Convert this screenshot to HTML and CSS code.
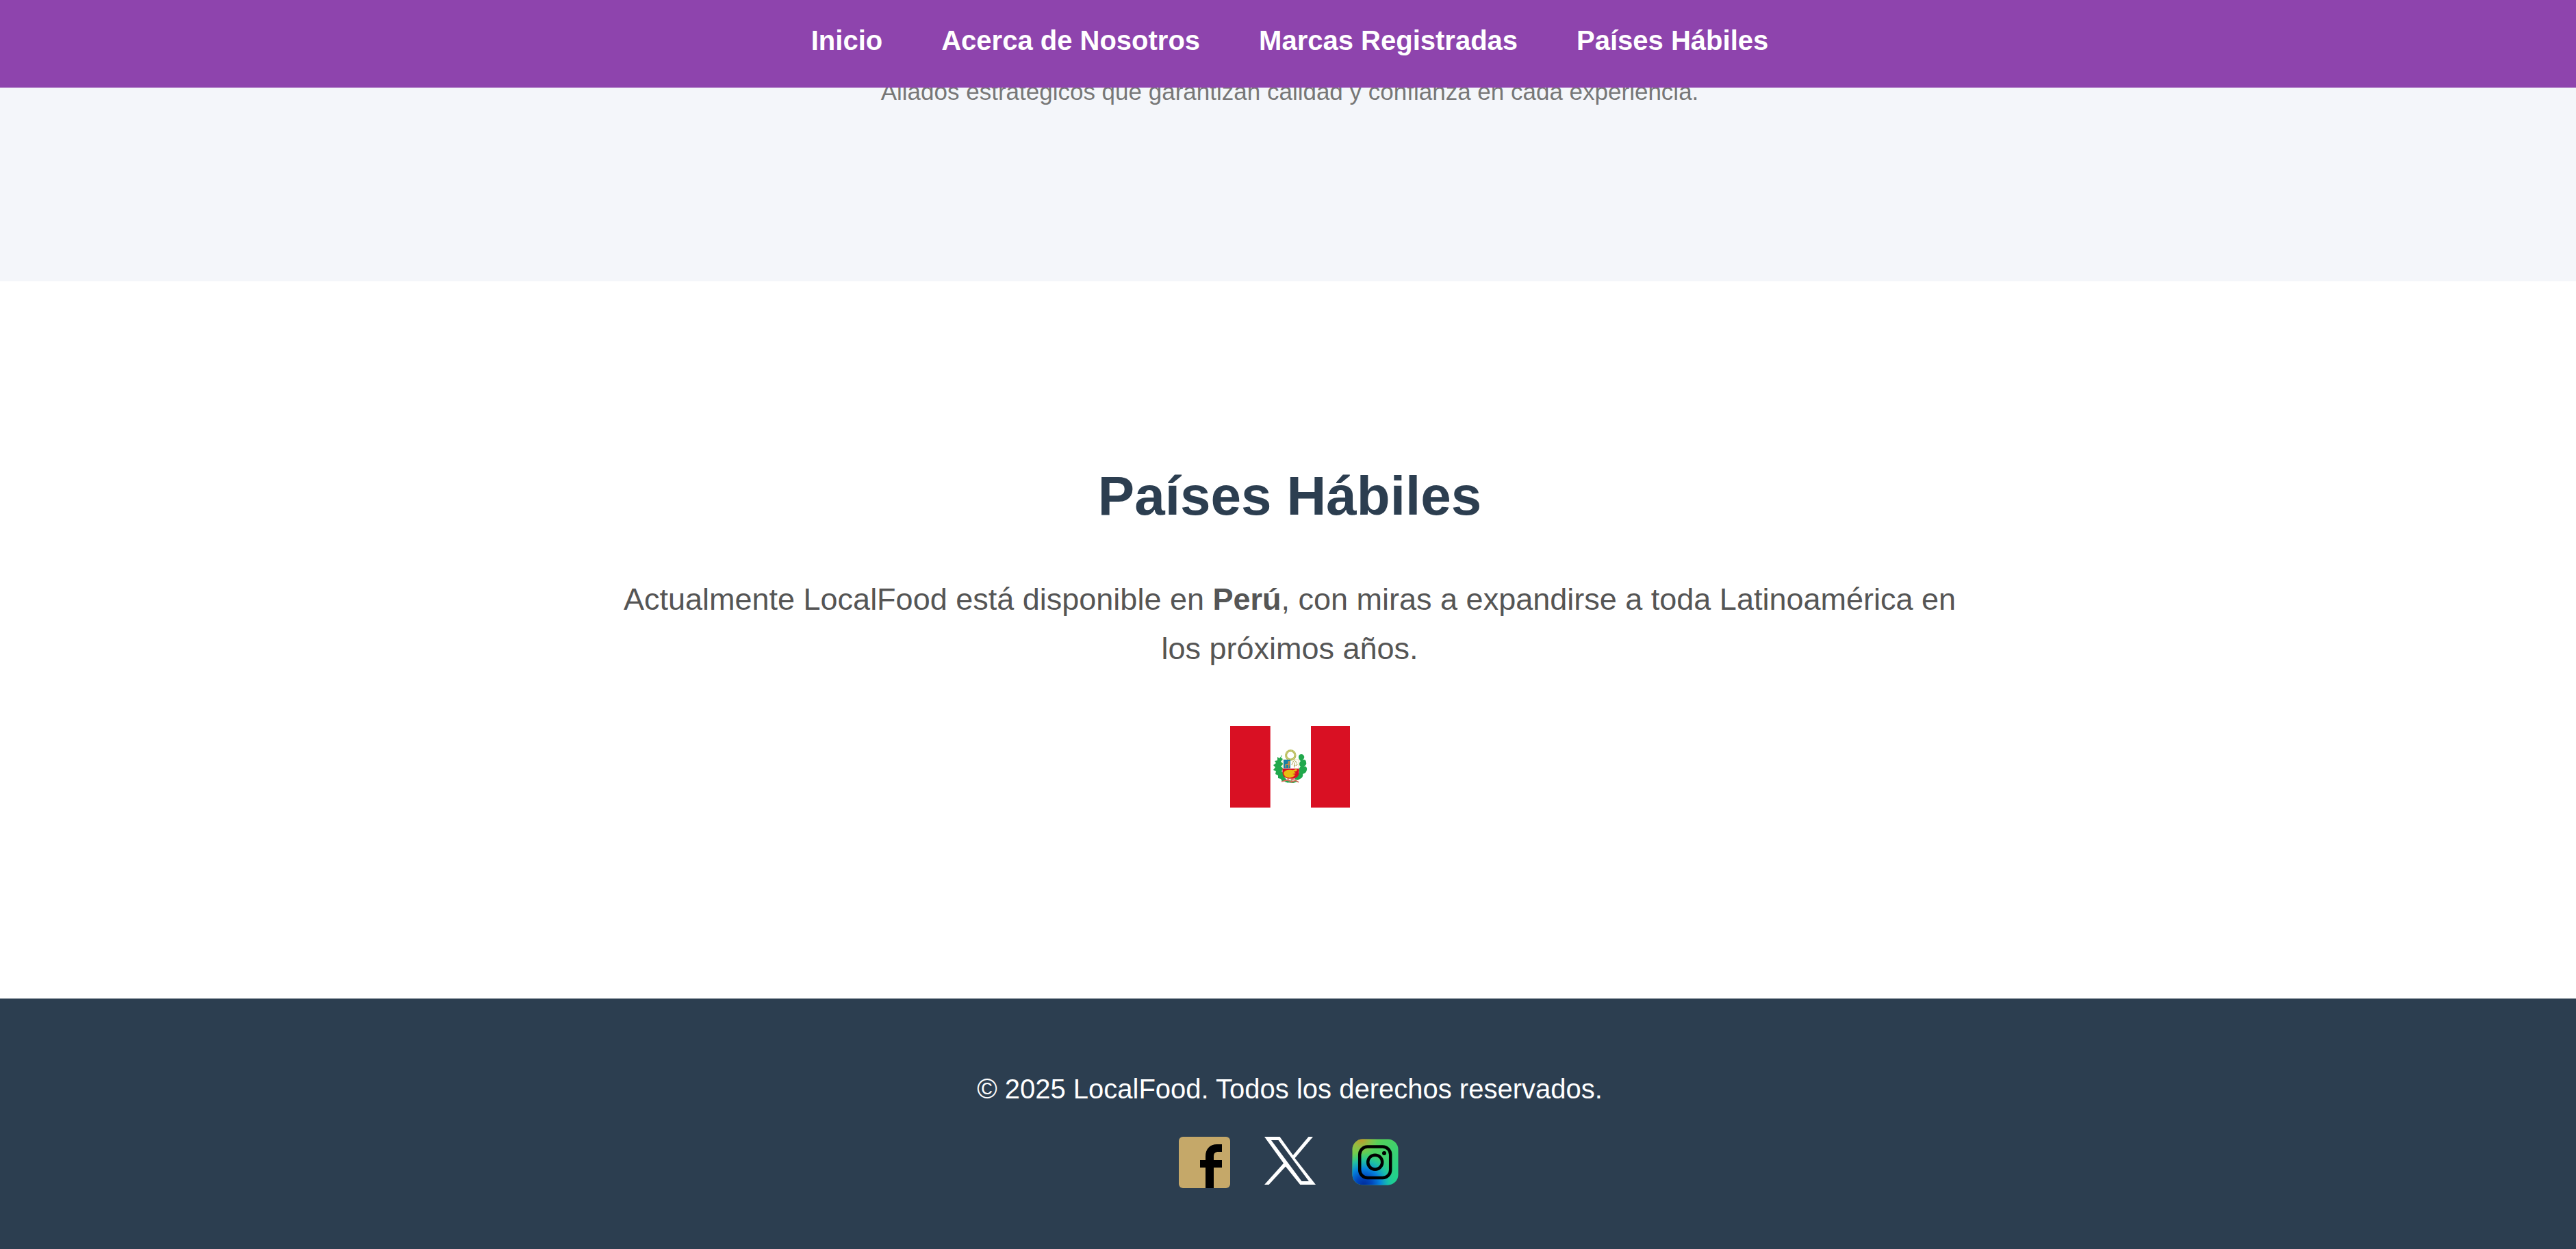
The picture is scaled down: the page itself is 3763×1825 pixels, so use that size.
FILE: index.html
```html
<!DOCTYPE html>
<html lang="es">
<head>
<meta charset="utf-8">
<title>LocalFood</title>
<link rel="stylesheet" href="styles.css">
</head>
<body>
<nav class="nav">
  <a href="#inicio">Inicio</a>
  <a href="#acerca">Acerca de Nosotros</a>
  <a href="#marcas">Marcas Registradas</a>
  <a href="#paises">Países Hábiles</a>
</nav>
<section class="brands" id="marcas">
  <p>Aliados estratégicos que garantizan calidad y confianza en cada experiencia.</p>
</section>
<section class="countries" id="paises">
  <h2>Países Hábiles</h2>
  <p>Actualmente LocalFood está disponible en <strong>Perú</strong>, con miras a expandirse a toda Latinoamérica en los próximos años.</p>
  <svg class="flag" viewBox="0 0 175 119" role="img" aria-label="Perú">
    <path fill="#fff" d="M0 0h175v119H0z"/>
    <path fill="#d91023" d="M0 0h58.700v119H0zM118 0h57v119h-57z"/>
    <g fill="#21a84c">
      <path d="M76 42l-4 5-3-2 0 5-4 1 2 3-4 3 3 3-3 4 4 2-1 4 4 2 0 4 4 1 2 4 5 0 4 2-2-4-4-5 1-5-5-3 3-4-4-3 4-4-4-3 3-4-3-2 2-3z"/>
      <path d="M101 42c3-2 6-1 7 2 1 2-1 5-3 6 3-2 6-1 6 3 1 3-1 5-4 6 3-1 6 1 5 5s-3 5-6 6c1 3-1 6-4 7-3 3-7 2-8-1 3-2 6-5 7-9-2-3 0-6 2-8-3-2-2-6 0-8-3-3-4-6-2-9z"/>
      <path d="M84 79l10 1 6 1-8 2-12-1z"/>
    </g>
    <path fill="#fff" stroke="#e4d28b" stroke-width=".6" d="M77 49h23v17c0 7-5 11-11.500 11S77 73 77 66z"/>
    <circle cx="88.300" cy="42.500" r="6.700" fill="#fff" stroke="#b9bd5b" stroke-width="3.200"/>
    <circle cx="88.300" cy="42.500" r="6.700" fill="none" stroke="#e6e3b8" stroke-width="1" stroke-dasharray="1 1.500"/>
    <path fill="#1680a8" d="M78 49h10v12.500H78z"/>
    <path fill="#d91023" d="M76.500 62h24v6c0 6-5 9-12 9s-12-3-12-9z"/>
    <path fill="#c78c48" d="M85 51h2v5l-1 5h-1v-4h-3v4h-1l-1-5 4-1z"/>
    <path d="M94 60.500V53" stroke="#ad9b42" stroke-width="1"/>
    <path fill="none" stroke="#b5ad63" stroke-width="1.500" stroke-dasharray="1.500 1" d="M90 57l2-5 2-2 3 3 1 4-6 1"/>
    <path fill="#e8be12" d="M78 68c2-4 7-5 12-4 4 1 5-2 7-1 2 2-1 4-4 3l3 3-5 1 4 1c-2 4-7 5-12 4-3-1-5-4-5-7z"/>
    <path fill="none" stroke="#dc6757" stroke-width="1.500" d="M75 81l8-2 4-3 4 2 4 1 5 3M84 79l6 3 6-3M90 77v5"/>
  </svg>
</section>
<footer class="footer">
  <p>© 2025 LocalFood. Todos los derechos reservados.</p>
  <div class="social">
    <svg viewBox="0 0 75 75" aria-label="Facebook">
      <rect width="75" height="75" rx="6" fill="#c5a869"/>
      <path d="M39 75V45h-8V34h8v-5c0-11 6-18 17-18h7v11h-5c-5 0-7 2-7 7v5h12v11H51v30z"/>
    </svg>
    <svg viewBox="0 0 75 75" aria-label="X">
      <path fill="#fff" fill-rule="evenodd" d="M0 0h22.500l19.300 27L64.500 0H71L44.500 31.200 75 70H52.300L31 43.400 6.500 70H0l28-31.300zM10 5l44.500 60H65L20.500 5z"/>
    </svg>
    <svg viewBox="0 0 75 75" aria-label="Instagram">
      <defs>
        <linearGradient id="green" x1="0" y1="0" x2="1" y2="1"><stop offset="0" stop-color="#98c440"/><stop offset=".35" stop-color="#50d05c"/><stop offset="1" stop-color="#18d096"/></linearGradient>
        <radialGradient id="blue" cx=".25" cy="1" r=".72"><stop offset="0" stop-color="#002c9b"/><stop offset=".25" stop-color="#0048bd"/><stop offset=".5" stop-color="#0682dc"/><stop offset=".75" stop-color="#13bcb5" stop-opacity=".75"/><stop offset="1" stop-color="#24d088" stop-opacity="0"/></radialGradient>
        <radialGradient id="gold" cx=".2" cy="0" r=".35"><stop offset="0" stop-color="#c2962b"/><stop offset="1" stop-color="#98c440" stop-opacity="0"/></radialGradient>
      </defs>
      <rect x="3.500" y="3.500" width="67" height="67" rx="15" fill="url(#green)"/>
      <rect x="3.500" y="3.500" width="67" height="67" rx="15" fill="url(#blue)"/>
      <rect x="3.500" y="3.500" width="67" height="67" rx="15" fill="url(#gold)"/>
      <g fill="none" stroke="#000" stroke-width="4.500"><rect x="14.200" y="14.500" width="45" height="45.500" rx="11.500"/><circle cx="36.700" cy="37.200" r="10.500"/></g>
      <circle cx="50" cy="24" r="3"/>
    </svg>
  </div>
</footer>
</body>
</html>
```
FILE: styles.css
```css
* { box-sizing: border-box; margin: 0; padding: 0; }
html { overflow: hidden; background: #fff; }
body { width: 3768px; height: 1825px; overflow: hidden; font-family: Arial, "Liberation Sans", sans-serif; }
.nav {
  position: relative; z-index: 1;
  display: flex; justify-content: center; gap: 86px;
  height: 128px; padding-top: 36px;
  background: #8e44ad; font-size: 40px; line-height: 46px;
}
.nav a { color: #fff; font-weight: bold; text-decoration: none; }
.brands {
  height: 310px; margin-top: -27px; padding-top: 5px;
  background: #f4f6fa; color: #777; text-align: center;
  font-size: 35px; line-height: 56px;
}
.countries {
  display: flex; flex-direction: column; align-items: center;
  height: 1048px; padding-top: 250px; text-align: center;
}
.countries h2 { font-size: 80px; line-height: 128px; color: #2c3e50; }
.countries p { width: 2000px; margin-top: 51px; font-size: 45px; line-height: 72px; color: #555; }
.flag { width: 175px; height: 119px; margin-top: 77px; }
.footer {
  display: flex; flex-direction: column; align-items: center;
  height: 366px; padding-top: 100px; background: #2c3e50; color: #fff;
}
.footer p { font-size: 40px; line-height: 64px; }
.social { display: flex; gap: 50px; margin-top: 38px; }
.social svg { width: 75px; height: 75px; }
```
